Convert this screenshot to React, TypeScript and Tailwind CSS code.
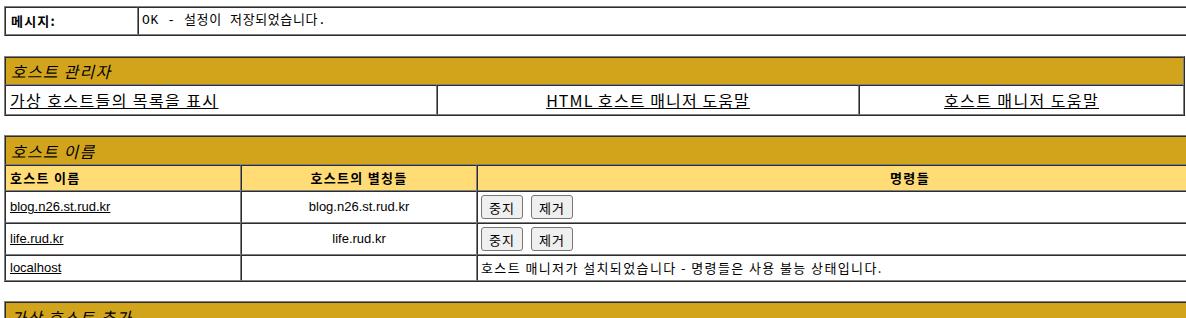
const kr = "font-['Noto_Sans_CJK_KR',sans-serif]";

const Cell = ({ className = '', children, ...rest }: React.TdHTMLAttributes<HTMLTableCellElement>) => (
  <td
    className={`border border-[#808080] [border-style:inset] px-[4px] py-0 align-middle ${className}`}
    {...rest}
  >
    {children}
  </td>
);

const tableCls =
  'border-separate border-spacing-0 table-fixed border border-[#808080] [border-style:outset] bg-white text-black';

const hosts = [
  { name: 'blog.n26.st.rud.kr', alias: 'blog.n26.st.rud.kr', active: true },
  { name: 'life.rud.kr', alias: 'life.rud.kr', active: true },
  { name: 'localhost', alias: '', active: false },
];

const Btn = ({ label }: { label: string }) => (
  <button
    className={`h-[24px] w-[42px] rounded-[3px] border border-[#767676] bg-[#efefef] text-[13px] leading-none tracking-[1px] text-black ${kr}`}
  >
    {label}
  </button>
);

const App = () => {
  return (
    <div className={`w-[1186px] h-[318px] overflow-hidden bg-white pl-[4px] pt-[6px] ${kr}`}>
      {/* 메시지 */}
      <table className={`${tableCls} w-[1340px]`}>
        <colgroup>
          <col className="w-[133px]" />
          <col />
        </colgroup>
        <tbody>
          <tr>
            <Cell className="h-[28px] text-[13px] font-bold tracking-[1.2px] pl-[5px]">메시지:</Cell>
            <Cell className="h-[28px] text-[13px] tracking-[0.6px] pl-[3px] font-['Liberation_Mono','Noto_Sans_CJK_KR',monospace]">
              OK - 설정이 저장되었습니다.
            </Cell>
          </tr>
        </tbody>
      </table>

      {/* 호스트 관리자 */}
      <table className={`${tableCls} w-[1181px] mt-[20px]`}>
        <colgroup>
          <col className="w-[432px]" />
          <col className="w-[422px]" />
          <col className="w-[325px]" />
        </colgroup>
        <tbody>
          <tr>
            <Cell colSpan={3} className="h-[28px] bg-[#D2A41C] text-[16px] italic tracking-[1.2px] pl-[5px]">
              호스트 관리자
            </Cell>
          </tr>
          <tr>
            <Cell className="h-[30px] text-[16px] tracking-[1.4px] pl-[4px]">
              <a href="#" className="underline">가상 호스트들의 목록을 표시</a>
            </Cell>
            <Cell className="h-[30px] text-[16px] tracking-[1.1px] text-center">
              <a href="#" className="underline">HTML 호스트 매니저 도움말</a>
            </Cell>
            <Cell className="h-[30px] text-[16px] tracking-[1.4px] text-center">
              <a href="#" className="underline">호스트 매니저 도움말</a>
            </Cell>
          </tr>
        </tbody>
      </table>

      {/* 호스트 이름 */}
      <table className={`${tableCls} w-[1340px] mt-[19px]`}>
        <colgroup>
          <col className="w-[236px]" />
          <col className="w-[236px]" />
          <col />
        </colgroup>
        <tbody>
          <tr>
            <Cell colSpan={3} className="h-[29px] bg-[#D2A41C] text-[16px] italic tracking-[1.2px] pl-[5px]">
              호스트 이름
            </Cell>
          </tr>
          <tr>
            <Cell className="h-[26px] bg-[#FFDC75] text-[13px] font-bold tracking-[1.3px] pl-[4px]">호스트 이름</Cell>
            <Cell className="h-[26px] bg-[#FFDC75] text-[13px] font-bold tracking-[1.3px] text-center">호스트의 별칭들</Cell>
            <Cell className="h-[26px] bg-[#FFDC75] text-[13px] font-bold tracking-[1.3px] text-center">명령들</Cell>
          </tr>
          {hosts.map((h) => (
            <tr key={h.name}>
              <Cell className={`${h.active ? 'h-[32px]' : 'h-[26px]'} text-[13px] pl-[4px] font-['Liberation_Sans',sans-serif]`}>
                <a href="#" className="underline">{h.name}</a>
              </Cell>
              <Cell className="text-[13px] text-center font-['Liberation_Sans',sans-serif]">{h.alias}</Cell>
              <Cell className="text-[13px] pl-[3px]">
                {h.active ? (
                  <div className="flex gap-[8px]">
                    <Btn label="중지" />
                    <Btn label="제거" />
                  </div>
                ) : (
                  <span className="tracking-[1.4px]">
                    호스트 매니저가 설치되었습니다 - 명령들은 사용 불능 상태입니다.
                  </span>
                )}
              </Cell>
            </tr>
          ))}
        </tbody>
      </table>

      {/* 가상 호스트 추가 */}
      <table className={`${tableCls} w-[1340px] mt-[19px]`}>
        <tbody>
          <tr>
            <Cell className="h-[29px] bg-[#D2A41C] text-[16px] italic tracking-[1.2px] pl-[5px]">가상 호스트 추가</Cell>
          </tr>
          <tr>
            <Cell className="h-[26px] bg-[#FFDC75] text-[13px] font-bold pl-[4px]">호스트</Cell>
          </tr>
        </tbody>
      </table>
    </div>
  );
};

export default App;
